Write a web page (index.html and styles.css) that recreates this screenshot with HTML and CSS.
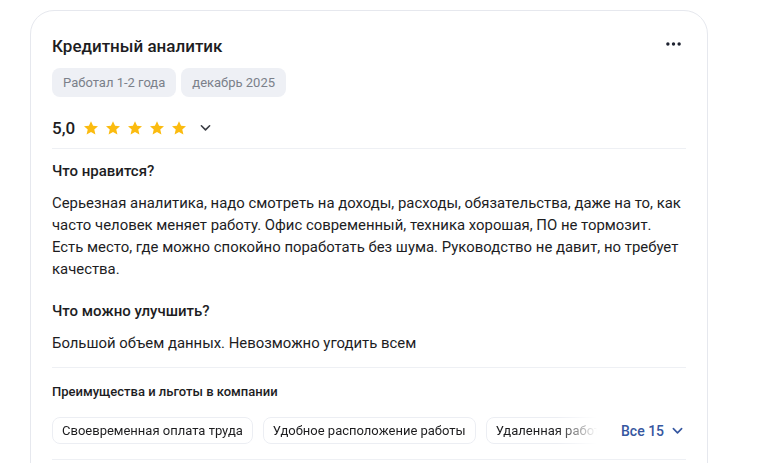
FILE: index.html
```html
<!DOCTYPE html>
<html lang="ru">
<head>
<meta charset="utf-8">
<link rel="stylesheet" href="styles.css">
</head>
<body>
<article class="card">
  <header class="head">
    <h2 class="title">Кредитный аналитик</h2>
    <button class="more" aria-label="Ещё">
      <svg width="16" height="4" viewBox="0 0 16 4"><circle cx="2" cy="2" r="1.8"/><circle cx="8" cy="2" r="1.8"/><circle cx="14" cy="2" r="1.8"/></svg>
    </button>
  </header>
  <div class="tags">
    <span class="tag">Работал 1-2 года</span>
    <span class="tag">декабрь 2025</span>
  </div>
  <div class="rating">
    <span class="score">5,0</span>
    <span class="stars">
      <svg viewBox="0 0 24 24"><path d="M12 1.8l3.1 6.9 7.4.7-5.6 5 1.7 7.4L12 18l-6.6 3.8 1.7-7.4-5.6-5 7.4-.7z"/></svg>
      <svg viewBox="0 0 24 24"><path d="M12 1.8l3.1 6.9 7.4.7-5.6 5 1.7 7.4L12 18l-6.6 3.8 1.7-7.4-5.6-5 7.4-.7z"/></svg>
      <svg viewBox="0 0 24 24"><path d="M12 1.8l3.1 6.9 7.4.7-5.6 5 1.7 7.4L12 18l-6.6 3.8 1.7-7.4-5.6-5 7.4-.7z"/></svg>
      <svg viewBox="0 0 24 24"><path d="M12 1.8l3.1 6.9 7.4.7-5.6 5 1.7 7.4L12 18l-6.6 3.8 1.7-7.4-5.6-5 7.4-.7z"/></svg>
      <svg viewBox="0 0 24 24"><path d="M12 1.8l3.1 6.9 7.4.7-5.6 5 1.7 7.4L12 18l-6.6 3.8 1.7-7.4-5.6-5 7.4-.7z"/></svg>
    </span>
    <svg class="chev" viewBox="0 0 12 8"><path d="M1.5 1.5L6 6l4.5-4.5"/></svg>
  </div>
  <section class="block first">
    <h3 class="q">Что нравится?</h3>
    <p class="a">Серьезная аналитика, надо смотреть на доходы, расходы, обязательства, даже на то, как часто человек меняет работу. Офис современный, техника хорошая, ПО не тормозит. Есть место, где можно спокойно поработать без шума. Руководство не давит, но требует качества.</p>
  </section>
  <section class="block">
    <h3 class="q">Что можно улучшить?</h3>
    <p class="a">Большой объем данных. Невозможно угодить всем</p>
  </section>
  <section class="perks">
    <h4 class="perks-title">Преимущества и льготы в компании</h4>
    <div class="perks-row">
      <div class="chips">
        <span class="chip">Своевременная оплата труда</span>
        <span class="chip">Удобное расположение работы</span>
        <span class="chip">Удаленная работа</span>
      </div>
      <button class="all">Все 15
        <svg viewBox="0 0 12 8"><path d="M1.5 1.5L6 6l4.5-4.5"/></svg>
      </button>
    </div>
  </section>
</article>
</body>
</html>
```
FILE: styles.css
```css
* { box-sizing: border-box; }
html, body { margin: 0; background: #fff; }
body {
  font-family: Roboto, "Noto Sans", sans-serif;
  color: #1d1d1f;
  height: 463px;
  overflow: hidden;
}
.card {
  margin: 10px 0 0 30px;
  width: 678px;
  border: 1px solid #e6e8ee;
  border-radius: 24px;
  padding: 22px 21px 0 21px;
  height: 480px;
}
.head {
  display: flex;
  justify-content: space-between;
  align-items: center;
  height: 26px;
}
.title {
  margin: 0;
  font-size: 17px;
  font-weight: 500;
  line-height: 26px;
}
.more {
  border: 0;
  background: none;
  padding: 0;
  margin: 0 5px 5px 0;
  display: flex;
}
.more svg { width: 15px; height: 4px; fill: #1d2230; }
.tags {
  display: flex;
  gap: 5px;
  margin-top: 9px;
}
.tag {
  background: #eef0f5;
  color: #7b808a;
  font-size: 13px;
  line-height: 29px;
  height: 29px;
  padding: 0 11px;
  border-radius: 8px;
}
.rating {
  display: flex;
  align-items: center;
  height: 24px;
  margin-top: 19px;
}
.score {
  font-size: 17px;
  font-weight: 500;
  margin-right: 8px;
}
.stars { display: flex; gap: 6px; }
.stars svg { width: 16px; height: 16px; fill: #fbbb0f; }
.chev {
  width: 11px;
  height: 8px;
  margin-left: 13px;
  fill: none;
  stroke: #3a3d44;
  stroke-width: 1.7;
  stroke-linecap: round;
  stroke-linejoin: round;
}
.block.first {
  border-top: 1px solid #eef0f4;
  margin-top: 8px;
  padding-top: 12px;
}
.block { padding-top: 21px; }
.q {
  margin: 0;
  font-size: 15px;
  font-weight: 500;
  line-height: 20px;
}
.a {
  margin: 11px 0 0;
  font-size: 14.9px;
  line-height: 22px;
  color: #1d1d1f;
}
.perks {
  border-top: 1px solid #eef0f4;
  margin-top: 13px;
  padding-top: 15px;
}
.perks-title {
  margin: 0;
  font-size: 13px;
  font-weight: 500;
  line-height: 18px;
}
.perks-row {
  display: flex;
  align-items: center;
  margin-top: 16px;
  border-bottom: 1px solid #eef0f4;
  padding-bottom: 15px;
}
.chips {
  display: flex;
  gap: 10px;
  width: 552px;
  overflow: hidden;
  -webkit-mask-image: linear-gradient(to right, #000 505px, transparent 545px);
  mask-image: linear-gradient(to right, #000 505px, transparent 545px);
}
.chip {
  flex: none;
  border: 1px solid #eceef3;
  border-radius: 8px;
  font-size: 13px;
  line-height: 25px;
  padding: 0 9px;
  color: #1d1d1f;
}
.all {
  margin-left: 17px;
  border: 0;
  background: none;
  padding: 0;
  font-family: inherit;
  font-size: 14px;
  font-weight: 500;
  color: #3657a0;
  display: flex;
  align-items: center;
  gap: 8px;
}
.all svg {
  width: 11px;
  height: 8px;
  fill: none;
  stroke: #3657a0;
  stroke-width: 1.8;
  stroke-linecap: round;
  stroke-linejoin: round;
}
```
